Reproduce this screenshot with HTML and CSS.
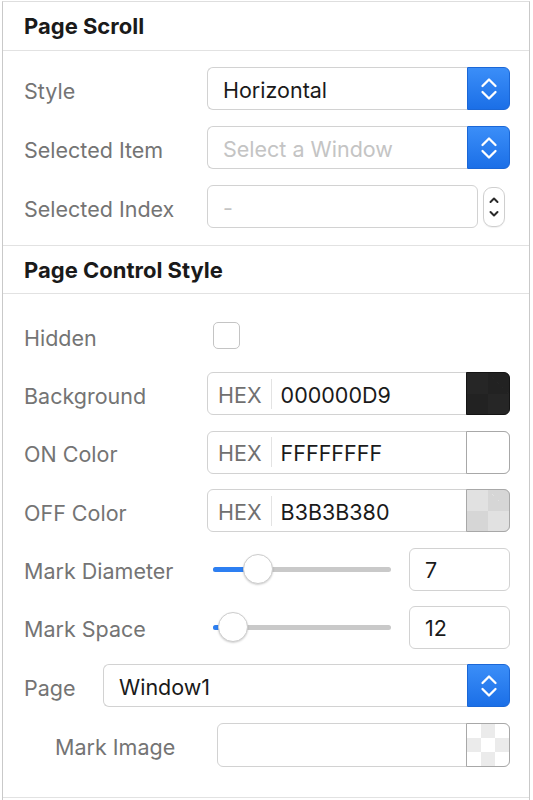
FILE: index.html
```html
<!DOCTYPE html>
<html>
<head>
<meta charset="utf-8">
<link rel="stylesheet" href="styles.css">
</head>
<body>
<div class="panel">
  <section class="sec sec-a">
    <h2 class="sec-title">Page Scroll</h2>
    <div class="rows rows-a">
      <div class="row">
        <span class="label">Style</span>
        <div class="popup">
          <span class="popup-field">Horizontal</span>
          <span class="popup-btn"><svg width="18" height="26" viewBox="0 0 18 26"><polyline points="2.5,10 9,3.5 15.5,10" /><polyline points="2.5,16 9,22.5 15.5,16" /></svg></span>
        </div>
      </div>
      <div class="row">
        <span class="label">Selected Item</span>
        <div class="popup">
          <span class="popup-field placeholder">Select a Window</span>
          <span class="popup-btn"><svg width="18" height="26" viewBox="0 0 18 26"><polyline points="2.5,10 9,3.5 15.5,10" /><polyline points="2.5,16 9,22.5 15.5,16" /></svg></span>
        </div>
      </div>
      <div class="row">
        <span class="label">Selected Index</span>
        <div class="index-ctl">
          <span class="box index-box placeholder">-</span>
          <span class="stepper"><svg width="12" height="30" viewBox="0 0 12 30"><polyline points="2.5,10 6,6.5 9.5,10" /><polyline points="2.5,20 6,23.5 9.5,20" /></svg></span>
        </div>
      </div>
    </div>
  </section>
  <section class="sec">
    <h2 class="sec-title sec-title-b">Page Control Style</h2>
    <div class="rows rows-b">
      <div class="row">
        <span class="label">Hidden</span>
        <span class="checkbox"></span>
      </div>
      <div class="row">
        <span class="label">Background</span>
        <div class="box color">
          <span class="hex">HEX</span>
          <span class="divider"></span>
          <span class="value">000000D9</span>
          <span class="swatch swatch-dark"></span>
        </div>
      </div>
      <div class="row">
        <span class="label">ON Color</span>
        <div class="box color">
          <span class="hex">HEX</span>
          <span class="divider"></span>
          <span class="value">FFFFFFFF</span>
          <span class="swatch swatch-white"></span>
        </div>
      </div>
      <div class="row">
        <span class="label">OFF Color</span>
        <div class="box color">
          <span class="hex">HEX</span>
          <span class="divider"></span>
          <span class="value">B3B3B380</span>
          <span class="swatch swatch-gray"></span>
        </div>
      </div>
      <div class="row">
        <span class="label">Mark Diameter</span>
        <div class="slider-ctl">
          <div class="track">
            <span class="fill" style="width:45px"></span>
            <span class="thumb" style="left:45px"></span>
          </div>
          <span class="box num">7</span>
        </div>
      </div>
      <div class="row">
        <span class="label">Mark Space</span>
        <div class="slider-ctl">
          <div class="track">
            <span class="fill" style="width:20px"></span>
            <span class="thumb" style="left:20px"></span>
          </div>
          <span class="box num">12</span>
        </div>
      </div>
      <div class="row row-page">
        <span class="label">Page</span>
        <div class="popup">
          <span class="popup-field">Window1</span>
          <span class="popup-btn"><svg width="18" height="26" viewBox="0 0 18 26"><polyline points="2.5,10 9,3.5 15.5,10" /><polyline points="2.5,16 9,22.5 15.5,16" /></svg></span>
        </div>
      </div>
      <div class="row row-image">
        <span class="label">Mark Image</span>
        <div class="box image">
          <span class="swatch swatch-checker"></span>
        </div>
      </div>
    </div>
  </section>
</div>
</body>
</html>
```

FILE: styles.css
```css
html, body {
  margin: 0;
  padding: 0;
  background: #ffffff;
}

body {
  font-family: Inter, "Noto Sans", "Liberation Sans", sans-serif;
  font-size: 21.5px;
  color: #1c1c1c;
}

.panel {
  box-sizing: border-box;
  margin: 1px 0 0 2px;
  width: 528px;
  height: 799px;
  border-top: 1px solid #dedede;
  border-left: 1px solid #c9c9c9;
  border-right: 1px solid #c9c9c9;
}

.sec {
  border-bottom: 1px solid #e2e2e2;
}

.sec-title {
  margin: 0;
  height: 49px;
  box-sizing: border-box;
  padding-left: 21px;
  display: flex;
  align-items: center;
  font-size: 22px;
  font-weight: 700;
  color: #1a1a1a;
  border-bottom: 1px solid #e2e2e2;
}

.sec-title-b {
  height: 48px;
}

.rows {
  display: flex;
  flex-direction: column;
  padding: 16px 19px 16px 21px;
}

.rows-a {
  gap: 16px;
  padding-bottom: 17px;
}

.rows-b {
  gap: 15.4px;
  padding-top: 20px;
  padding-bottom: 30px;
}

.row {
  display: grid;
  grid-template-columns: 183px 1fr;
  align-items: center;
  height: 43px;
}

.row-page {
  grid-template-columns: 79px 1fr;
}

.row-image {
  grid-template-columns: 193px 1fr;
  height: 44px;
}

.row-image .label {
  padding-left: 31px;
}

.label {
  color: #747474;
  white-space: nowrap;
  padding-top: 4px;
}

.placeholder {
  color: #c4c4c4;
}

/* popup button */
.popup {
  display: flex;
  height: 43px;
}

.popup-field {
  flex: 1;
  box-sizing: border-box;
  display: flex;
  align-items: center;
  padding: 2px 0 0 15px;
  border: 1px solid #d2d2d2;
  border-right: none;
  border-radius: 6px 0 0 6px;
  color: #1a1a1a;
}

.popup-field.placeholder {
  color: #c4c4c4;
}

.popup-btn {
  width: 43px;
  box-sizing: border-box;
  display: flex;
  align-items: center;
  justify-content: center;
  background: linear-gradient(#3b8ef8, #1b6fe7);
  border: 1px solid #1b67d6;
  border-radius: 0 6px 6px 0;
}

.popup-btn polyline {
  fill: none;
  stroke: #ffffff;
  stroke-width: 2.3;
  stroke-linecap: round;
  stroke-linejoin: round;
}

/* generic box */
.box {
  box-sizing: border-box;
  height: 43px;
  border: 1px solid #d2d2d2;
  border-radius: 6px;
  background: #fff;
}

.index-ctl {
  display: flex;
  align-items: center;
  gap: 5px;
  padding-right: 5px;
}

.index-box {
  flex: 1;
  display: flex;
  align-items: center;
  padding: 2px 0 0 15px;
}

.stepper {
  box-sizing: border-box;
  width: 22px;
  height: 40px;
  border: 1px solid #cfcfcf;
  border-radius: 9px;
  display: flex;
  align-items: center;
  justify-content: center;
  box-shadow: 0 1px 1px rgba(0, 0, 0, 0.06);
}

.stepper polyline {
  fill: none;
  stroke: #2a2a2a;
  stroke-width: 2;
  stroke-linecap: round;
  stroke-linejoin: round;
}

.checkbox {
  box-sizing: border-box;
  margin-left: 6px;
  width: 27px;
  height: 27px;
  border: 1px solid #c4c4c4;
  border-radius: 5px;
  background: #fff;
}

/* color fields */
.color {
  display: flex;
  align-items: center;
}

.hex {
  padding: 2px 0 0 10px;
  color: #707070;
}

.divider {
  width: 1px;
  height: 30px;
  background: #e3e3e3;
  margin: 0 9px 0 9px;
}

.value {
  flex: 1;
  padding-top: 2px;
  color: #1a1a1a;
}

.swatch {
  box-sizing: border-box;
  align-self: stretch;
  width: 44px;
  margin: -1px -1px -1px 0;
  border-radius: 0 6px 6px 0;
  border: 1px solid #a8a8a8;
}

.swatch-dark {
  border-color: #141414;
  background-color: #262626;
  background-image:
    linear-gradient(45deg, #222 25%, transparent 25%, transparent 75%, #222 75%),
    linear-gradient(45deg, #222 25%, transparent 25%, transparent 75%, #222 75%);
  background-size: 42px 42px;
  background-position: 0 0, 21px 21px;
}

.swatch-white {
  background: #ffffff;
}

.swatch-gray {
  background-color: #e1e1e1;
  background-image:
    linear-gradient(45deg, #d6d6d6 25%, transparent 25%, transparent 75%, #d6d6d6 75%),
    linear-gradient(45deg, #d6d6d6 25%, transparent 25%, transparent 75%, #d6d6d6 75%);
  background-size: 42px 42px;
  background-position: 0 0, 21px 21px;
}

.image {
  display: flex;
  justify-content: flex-end;
  height: 44px;
}

.swatch-checker {
  background-color: #ffffff;
  background-image:
    linear-gradient(45deg, #ebebeb 25%, transparent 25%, transparent 75%, #ebebeb 75%),
    linear-gradient(45deg, #ebebeb 25%, transparent 25%, transparent 75%, #ebebeb 75%);
  background-size: 28px 28px;
  background-position: 0 0, 14px 14px;
}

/* sliders */
.slider-ctl {
  display: flex;
  align-items: center;
  justify-content: space-between;
}

.track {
  position: relative;
  margin-left: 6px;
  width: 178px;
  height: 5px;
  border-radius: 3px;
  background: #c9c9c9;
}

.fill {
  position: absolute;
  left: 0;
  top: 0;
  bottom: 0;
  border-radius: 3px 0 0 3px;
  background: #2d7ff2;
}

.thumb {
  position: absolute;
  top: 50%;
  width: 30px;
  height: 30px;
  box-sizing: border-box;
  margin: -15px 0 0 -15px;
  border-radius: 50%;
  background: #ffffff;
  border: 1px solid #cdcdcd;
  box-shadow: 0 1px 2px rgba(0, 0, 0, 0.18);
}

.num {
  width: 101px;
  display: flex;
  align-items: center;
  padding: 2px 0 0 15px;
  color: #1a1a1a;
}
```
